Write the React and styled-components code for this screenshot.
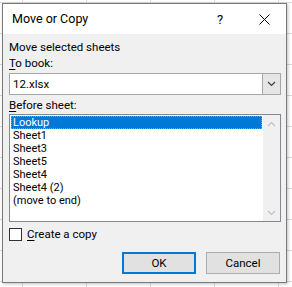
import React from 'react';
import styled, { createGlobalStyle } from 'styled-components';

const GlobalStyle = createGlobalStyle`
  html, body { margin: 0; padding: 0; height: 100%; }
  body {
    background-color: #fff;
    background-image:
      linear-gradient(to right, #d9d9d9 1px, transparent 1px),
      linear-gradient(to bottom, #d9d9d9 1px, transparent 1px);
    background-size: 64px 31px;
    background-position: 22px 2px;
    font-family: Roboto, "Noto Sans", sans-serif;
    color: #000;
    overflow: hidden;
  }
`;

const Page = styled.div`
  padding: 3px 0 0 2px;
`;

const Dialog = styled.div`
  width: 285px;
  height: 280px;
  box-sizing: border-box;
  border: 1px solid #7a7a7a;
  background: #f0f0f0;
  box-shadow: 1px 1px 3px rgba(0, 0, 0, 0.25);
  display: flex;
  flex-direction: column;
`;

const TitleBar = styled.div`
  height: 30px;
  flex: none;
  background: #fff;
  display: flex;
  align-items: center;
  padding-left: 9px;
`;

const Title = styled.div`
  flex: 1;
  font-size: 12.5px;
  line-height: 16px;
`;

const CaptionButton = styled.div`
  width: 44px;
  height: 30px;
  display: flex;
  align-items: center;
  justify-content: center;
  font-size: 13px;
`;

const Body = styled.div`
  flex: 1;
  display: flex;
  flex-direction: column;
  padding: 0 5px 0 6px;
`;

const Label = styled.div`
  font-size: 11.5px;
  line-height: 15px;
  height: 15px;
  margin-top: ${(p) => p.$mt || 0}px;
  white-space: nowrap;
`;

const Key = styled.span`
  text-decoration: underline;
  text-underline-offset: 2px;
`;

const Combo = styled.div`
  margin-top: 2px;
  height: 22px;
  box-sizing: border-box;
  border: 1px solid #a6a6a6;
  background: #fff;
  display: flex;
`;

const ComboText = styled.div`
  flex: 1;
  font-size: 11.5px;
  line-height: 20px;
  padding-left: 3px;
`;

const DropButton = styled.div`
  width: 17px;
  border-left: 1px solid #a6a6a6;
  background: #e5e5e5;
  display: flex;
  align-items: center;
  justify-content: center;
`;

const ListBox = styled.div`
  margin-top: 1px;
  height: 108px;
  box-sizing: border-box;
  border: 1px solid #828790;
  background: #fff;
  display: flex;
`;

const Items = styled.div`
  flex: 1;
  padding: 1px;
  display: flex;
  flex-direction: column;
`;

const Item = styled.div`
  height: 13px;
  line-height: 13px;
  font-size: 11px;
  padding-left: 2px;
  white-space: nowrap;
  background: ${(p) => (p.$selected ? '#0078d7' : 'transparent')};
  color: ${(p) => (p.$selected ? '#fff' : '#000')};
  outline: ${(p) => (p.$selected ? '1px dotted #ff8728' : 'none')};
  outline-offset: -1px;
`;

const ScrollBar = styled.div`
  width: 17px;
  background: #f0f0f0;
  display: flex;
  flex-direction: column;
  justify-content: space-between;
`;

const ScrollArrow = styled.div`
  height: 17px;
  display: flex;
  align-items: center;
  justify-content: center;
`;

const CheckRow = styled.div`
  margin-top: 6px;
  height: 13px;
  display: flex;
  align-items: center;
  gap: 5px;
`;

const CheckBox = styled.div`
  width: 13px;
  height: 13px;
  box-sizing: border-box;
  border: 1px solid #333;
  background: #fff;
`;

const CheckLabel = styled.div`
  font-size: 11.5px;
  line-height: 13px;
`;

const ButtonRow = styled.div`
  margin-top: 11px;
  display: flex;
  justify-content: flex-end;
  gap: 10px;
  padding-right: 1px;
`;

const Button = styled.div`
  width: 74px;
  height: 22px;
  box-sizing: border-box;
  border: ${(p) => (p.$default ? '2px solid #0078d7' : '1px solid #adadad')};
  background: #e1e1e1;
  display: flex;
  align-items: center;
  justify-content: center;
  font-size: 11.5px;
`;

const Chevron = ({ color, up }) => (
  <svg width="9" height="6" viewBox="0 0 9 6">
    <polyline
      points={up ? '1,5 4.5,1.5 8,5' : '1,1 4.5,4.5 8,1'}
      fill="none"
      stroke={color}
      strokeWidth="1.2"
    />
  </svg>
);

const sheets = ['Lookup', 'Sheet1', 'Sheet3', 'Sheet5', 'Sheet4', 'Sheet4 (2)', '(move to end)'];

export default function App() {
  return (
    <>
      <GlobalStyle />
      <Page>
        <Dialog>
          <TitleBar>
            <Title>Move or Copy</Title>
            <CaptionButton>?</CaptionButton>
            <CaptionButton>
              <svg width="11" height="11" viewBox="0 0 11 11">
                <path d="M0.5 0.5 L10.5 10.5 M10.5 0.5 L0.5 10.5" stroke="#000" strokeWidth="1" />
              </svg>
            </CaptionButton>
          </TitleBar>
          <Body>
            <Label $mt={6}>Move selected sheets</Label>
            <Label $mt={1}>
              <Key>T</Key>o book:
            </Label>
            <Combo>
              <ComboText>12.xlsx</ComboText>
              <DropButton>
                <Chevron color="#404040" />
              </DropButton>
            </Combo>
            <Label $mt={3}>
              <Key>B</Key>efore sheet:
            </Label>
            <ListBox>
              <Items>
                {sheets.map((s, i) => (
                  <Item key={s} $selected={i === 0}>
                    {s}
                  </Item>
                ))}
              </Items>
              <ScrollBar>
                <ScrollArrow>
                  <Chevron color="#c0c0c0" up />
                </ScrollArrow>
                <ScrollArrow>
                  <Chevron color="#c0c0c0" />
                </ScrollArrow>
              </ScrollBar>
            </ListBox>
            <CheckRow>
              <CheckBox />
              <CheckLabel>
                <Key>C</Key>reate a copy
              </CheckLabel>
            </CheckRow>
            <ButtonRow>
              <Button $default>OK</Button>
              <Button>Cancel</Button>
            </ButtonRow>
          </Body>
        </Dialog>
      </Page>
    </>
  );
}
